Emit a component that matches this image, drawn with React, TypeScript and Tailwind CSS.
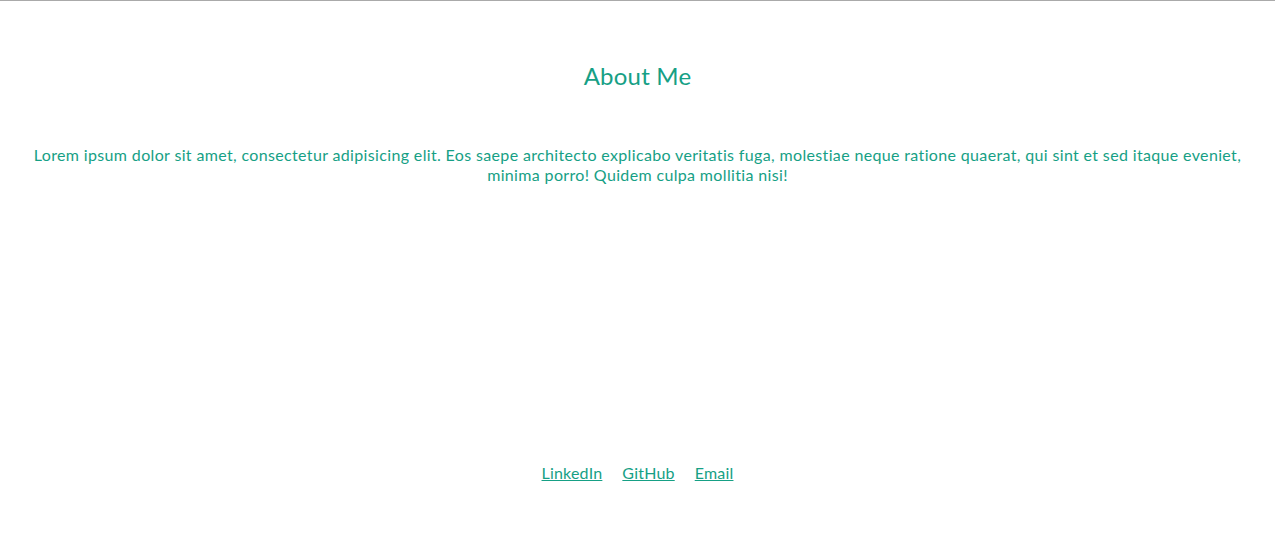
export default function App() {
  return (
    <div
      className="min-h-screen bg-white border-t border-[#aaaaaa] text-[#16a085]"
      style={{ fontFamily: "Lato, 'Open Sans', sans-serif" }}
    >
      <section className="px-4 pt-[60px] text-center">
        <h2 className="text-[24px] leading-[30px] tracking-[0.2px]">About Me</h2>
        <p className="mt-[54px] text-[16px] leading-[20px] tracking-[0.35px]">
          Lorem ipsum dolor sit amet, consectetur adipisicing elit. Eos saepe architecto explicabo veritatis fuga,
          molestiae neque ratione quaerat, qui sint et sed itaque eveniet, minima porro! Quidem culpa mollitia nisi!
        </p>
      </section>

      <footer className="mt-[278px] flex justify-center gap-5 text-[16px] leading-[20px] tracking-[0.2px]">
        <a href="#" className="underline">LinkedIn</a>
        <a href="#" className="underline">GitHub</a>
        <a href="#" className="underline">Email</a>
      </footer>
    </div>
  );
}
